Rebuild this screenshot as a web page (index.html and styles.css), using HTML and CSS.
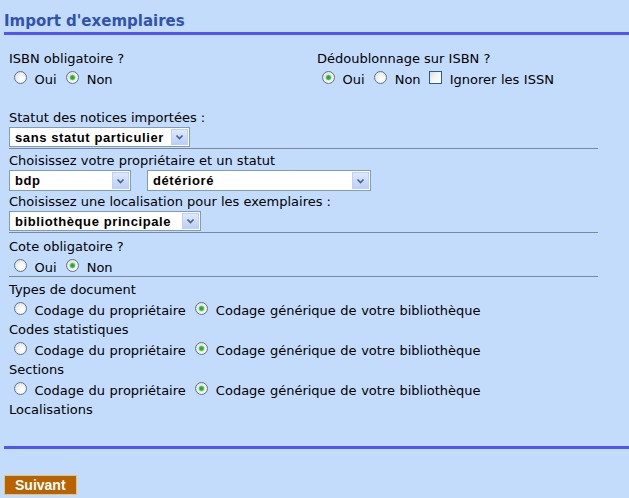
FILE: index.html
```html
<!DOCTYPE html>
<html lang="fr">
<head>
<meta charset="utf-8">
<title>Import d'exemplaires</title>
<link rel="stylesheet" href="styles.css">
</head>
<body>
<div class="page">
  <h1 class="title">Import d'exemplaires</h1>
  <form class="form">
    <div class="cols">
      <div class="col">
        <div class="label">ISBN obligatoire ?</div>
        <div class="choices"><input type="radio" name="isbn"> Oui <input type="radio" name="isbn" checked> Non</div>
      </div>
      <div class="col">
        <div class="label">Dédoublonnage sur ISBN ?</div>
        <div class="choices"><input type="radio" name="dedup" checked> Oui <input type="radio" name="dedup"> Non <input type="checkbox" name="issn"> Ignorer les ISSN</div>
      </div>
    </div>

    <div class="label first">Statut des notices importées :</div>
    <div class="sel w-statut">
      <select><option>sans statut particulier</option></select>
      <span class="sel-btn"><svg width="9" height="6" viewBox="0 0 9 6"><path d="M1.5 1.5 L4.5 4.5 L7.5 1.5" fill="none" stroke="#4a5d8c" stroke-width="1.6"/></svg></span>
    </div>
    <div class="sep"></div>

    <div class="label">Choisissez votre propriétaire et un statut</div>
    <div class="sel-row">
      <div class="sel w-owner tall">
        <select><option>bdp</option></select>
        <span class="sel-btn"><svg width="9" height="6" viewBox="0 0 9 6"><path d="M1.5 1.5 L4.5 4.5 L7.5 1.5" fill="none" stroke="#4a5d8c" stroke-width="1.6"/></svg></span>
      </div>
      <div class="sel w-state tall">
        <select><option>détérioré</option></select>
        <span class="sel-btn"><svg width="9" height="6" viewBox="0 0 9 6"><path d="M1.5 1.5 L4.5 4.5 L7.5 1.5" fill="none" stroke="#4a5d8c" stroke-width="1.6"/></svg></span>
      </div>
    </div>

    <div class="label after-row">Choisissez une localisation pour les exemplaires :</div>
    <div class="sel w-loc">
      <select><option>bibliothèque principale</option></select>
      <span class="sel-btn"><svg width="9" height="6" viewBox="0 0 9 6"><path d="M1.5 1.5 L4.5 4.5 L7.5 1.5" fill="none" stroke="#4a5d8c" stroke-width="1.6"/></svg></span>
    </div>
    <div class="sep sep-loc"></div>

    <div class="label">Cote obligatoire ?</div>
    <div class="choices short"><input type="radio" name="cote"> Oui <input type="radio" name="cote" checked> Non</div>
    <div class="sep sep-cote"></div>

    <div class="label">Types de document</div>
    <div class="choices"><input type="radio" name="types"> Codage du propriétaire <input type="radio" name="types" checked> Codage générique de votre bibliothèque</div>
    <div class="label">Codes statistiques</div>
    <div class="choices"><input type="radio" name="codes"> Codage du propriétaire <input type="radio" name="codes" checked> Codage générique de votre bibliothèque</div>
    <div class="label">Sections</div>
    <div class="choices"><input type="radio" name="sections"> Codage du propriétaire <input type="radio" name="sections" checked> Codage générique de votre bibliothèque</div>
    <div class="label">Localisations</div>
  </form>
  <div class="footer-rule"></div>
  <button type="button" class="btn">Suivant</button>
</div>
</body>
</html>
```

FILE: styles.css
```css
html, body {
  margin: 0;
  background: #c4dcfc;
}
body {
  font-family: "DejaVu Sans", Verdana, sans-serif;
  font-size: 13px;
  color: #000;
}
.page {
  padding-left: 4px;
}
.title {
  margin: 0;
  padding: 12px 0 2px;
  font-size: 15px;
  line-height: 18px;
  font-weight: bold;
  color: #3153b0;
  border-bottom: 3px solid #5454f4;
}
.form {
  padding: 14px 31px 0 5px;
}
.cols {
  display: grid;
  grid-template-columns: 308px 1fr;
}
.label {
  height: 19px;
  line-height: 19px;
  white-space: nowrap;
}
.label.first {
  margin-top: 19px;
}
.label.after-row {
  margin-top: 1px;
}
.choices {
  height: 21px;
  line-height: 19px;
  white-space: nowrap;
  word-spacing: 0.4px;
}
.choices.short {
  height: 20px;
}
input[type="radio"] {
  appearance: none;
  -webkit-appearance: none;
  box-sizing: border-box;
  width: 13px;
  height: 13px;
  margin: 3px 3px 0 5px;
  border: 1px solid #5e7390;
  border-radius: 50%;
  background: radial-gradient(circle at 62% 65%, #ffffff 0, #f6f6f3 35%, #d8d8d2 100%);
  vertical-align: baseline;
}
input[type="radio"]:checked {
  background:
    radial-gradient(circle at 50% 50%, #22a022 0, #3cb43c 1.8px, #a6dba6 2.8px, transparent 3.4px),
    radial-gradient(circle at 62% 65%, #ffffff 0, #f6f6f3 35%, #d8d8d2 100%);
}
input[type="checkbox"] {
  appearance: none;
  -webkit-appearance: none;
  box-sizing: border-box;
  width: 13px;
  height: 13px;
  margin: 3px 3px 0 4px;
  border: 1px solid #2b5a93;
  background: linear-gradient(135deg, #dcdcd6 0, #f4f4f1 45%, #ffffff 100%);
  vertical-align: baseline;
}
.sel {
  position: relative;
  height: 20px;
}
.sel.tall {
  height: 21px;
}
.sel select {
  appearance: none;
  -webkit-appearance: none;
  box-sizing: border-box;
  display: block;
  width: 100%;
  height: 100%;
  margin: 0;
  padding: 0 0 0 5px;
  border: 1px solid #7f9db9;
  border-radius: 0;
  background: #fff;
  color: #000;
  font-family: "Liberation Sans", Arial, sans-serif;
  font-size: 13px;
  font-weight: bold;
  letter-spacing: 0.6px;
  outline: none;
}
.sel-btn {
  position: absolute;
  top: 2px;
  right: 2px;
  bottom: 2px;
  width: 17px;
  box-sizing: border-box;
  border: 1px solid #bfd0f3;
  background: linear-gradient(#dfe9fd, #bccff8);
  display: flex;
  align-items: center;
  justify-content: center;
}
.w-statut { width: 181px; }
.w-owner { width: 122px; }
.w-state { width: 224px; }
.w-loc { width: 192px; }
.sel-row {
  display: flex;
  gap: 16px;
}
.sep {
  height: 0;
  border-top: 1px solid #7b8896;
  margin: 1px 0 2px;
}
.sep.sep-loc {
  margin: 1px 0 4px;
}
.sep.sep-cote {
  margin: 0 0 3px;
}
.footer-rule {
  margin-top: 27px;
  border-top: 3px solid #5454f4;
}
.btn {
  display: block;
  margin: 26px 0 0;
  height: 20px;
  padding: 0 10px;
  box-sizing: border-box;
  border: 1px solid #d9c58e;
  background: #b86200;
  color: #fff;
  font-family: "Liberation Sans", Arial, sans-serif;
  font-size: 14px;
  font-weight: bold;
  line-height: 17px;
  border-radius: 0;
}
```
